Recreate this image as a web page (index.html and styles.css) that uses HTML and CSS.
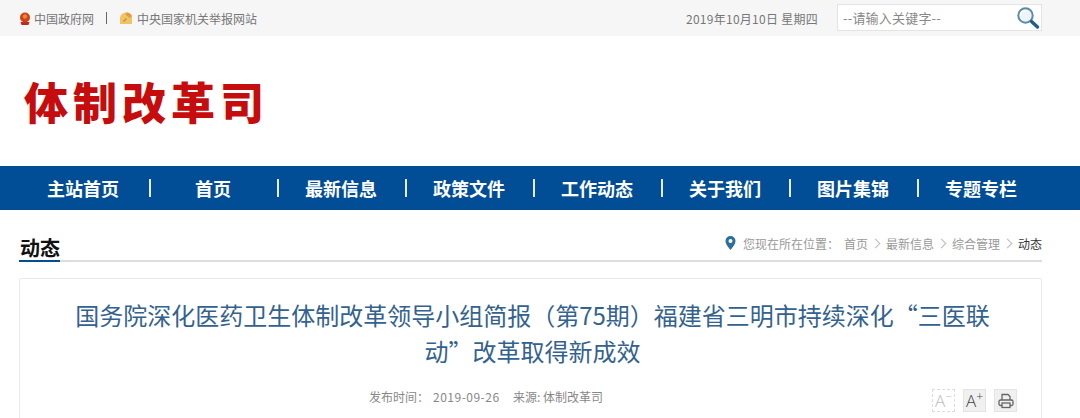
FILE: index.html
```html
<!DOCTYPE html>
<html lang="zh-CN">

<head>
    <meta charset="UTF-8">
    <title>体制改革司</title>
    <link rel="stylesheet" href="styles.css">
</head>

<body>
    <!-- 顶部 -->
    <div class="topbar">
        <div class="top-links">
            <svg class="emblem" width="12" height="13" viewBox="0 0 12 13">
                <circle cx="6" cy="5.500" r="5" fill="#d2401c"/>
                <circle cx="6" cy="4.500" r="2.200" fill="#e58a2e"/>
                <path d="M1.500 10h9l-1 3h-7z" fill="#b8301a"/>
            </svg>
            <span>中国政府网</span>
            <i class="top-sep"></i>
            <svg class="emblem emblem-2" width="12" height="12" viewBox="0 0 12 12">
                <path d="M0 12V6.500C0 3 3 .5 6.500 .5 9 .5 11 2 12 4v8z" fill="#eec563"/>
                <path d="M6.500 .5C9 .5 11 2 12 4L9.500 6 5.500 2.500z" fill="#e39a4a"/>
                <path d="M3 9l3-3 1 1-3 3z" fill="#d9863a"/>
            </svg>
            <span>中央国家机关举报网站</span>
        </div>
        <div class="top-right">
            <span class="top-date">2019年10月10日 星期四</span>
            <div class="search">
                <span class="search-text">--请输入关键字--</span>
                <svg width="24" height="24" viewBox="0 0 24 24">
                    <circle cx="9.500" cy="9.500" r="7.200" fill="#eef4f8" stroke="#5a8aa8" stroke-width="2"/>
                    <path d="M4.500 9.500a5 5 0 0 1 5-5" fill="none" stroke="#fff" stroke-width="1.500"/>
                    <path d="M15.500 15.500l6 5.500" stroke="#1f5f90" stroke-width="3.400" stroke-linecap="round"/>
                </svg>
            </div>
        </div>
    </div>

    <div class="logo">体制改革司</div>

    <!-- 导航 -->
    <div class="nav">
        <a class="nav-first">主站首页</a><i></i>
        <a>首页</a><i></i>
        <a>最新信息</a><i></i>
        <a>政策文件</a><i></i>
        <a>工作动态</a><i></i>
        <a>关于我们</a><i></i>
        <a>图片集锦</a><i></i>
        <a>专题专栏</a>
    </div>

    <div class="main">
        <div class="crumb-row">
            <h2 class="section-title">动态</h2>
            <div class="crumbs">
                <svg class="pin" width="11" height="14" viewBox="0 0 11 14">
                    <path fill-rule="evenodd" d="M5.500 0a5 5 0 0 1 5 5c0 3.500-5 9-5 9s-5-5.500-5-9a5 5 0 0 1 5-5zm0 3a2 2 0 1 0 0 4 2 2 0 0 0 0-4z" fill="#2a6f9e"/>
                </svg>
                <span class="here">您现在所在位置：</span>
                <span>首页</span><b></b>
                <span>最新信息</span><b></b>
                <span>综合管理</span><b></b>
                <span class="current">动态</span>
            </div>
        </div>

        <div class="article">
            <h1 class="article-title">国务院深化医药卫生体制改革领导小组简报（第75期）福建省三明市持续深化“三医联动”改革取得新成效</h1>
            <div class="meta-row">
                <div class="meta">
                    <span class="meta-label">发布时间：</span>
                    <span class="meta-date">2019-09-26</span>
                    <span>来源: 体制改革司</span>
                </div>
                <div class="tools">
                    <span class="tool tool-off">A<sup>−</sup></span>
                    <span class="tool">A<sup>+</sup></span>
                    <span class="tool">
                        <svg width="16" height="16" viewBox="0 0 16 16" fill="none" stroke="#666" stroke-width="1.300">
                            <path d="M4 7V1.500h6l2 2V7"/>
                            <rect x="1" y="7" width="14" height="5.500" rx="1.500"/>
                            <rect x="4" y="10" width="8" height="4.500" fill="#eee"/>
                        </svg>
                    </span>
                </div>
            </div>
        </div>
    </div>
</body>

</html>
```

FILE: styles.css
```css
* {
    margin: 0;
    padding: 0;
    box-sizing: border-box;
}

body {
    background: #fff;
    font-family: "Microsoft YaHei", "Noto Sans CJK SC", sans-serif;
    overflow: hidden;
}

.topbar {
    height: 36px;
    background: #f6f6f6;
    padding: 0 38px 0 19px;
    display: flex;
    justify-content: space-between;
    align-items: center;
    font-size: 12px;
    color: #777;
}

.top-links,
.top-right {
    display: flex;
    align-items: center;
}

.emblem {
    margin-right: 3px;
}

.emblem-2 {
    margin-right: 5px;
}

.top-sep {
    width: 1px;
    height: 12px;
    background: #666;
    margin: 0 13px 0 12px;
}

.top-date {
    margin-right: 19px;
    letter-spacing: 0.27px;
}

.search {
    width: 205px;
    height: 27px;
    background: #fff;
    border: 1px solid #e4e4e4;
    display: flex;
    justify-content: space-between;
    align-items: center;
    padding: 0 1px 0 5px;
    margin-top: -1px;
}

.search-text {
    font-size: 13px;
    letter-spacing: 0.2px;
    color: #888;
}

.logo {
    height: 130px;
    padding: 36px 0 0 24px;
    font-size: 44px;
    line-height: 58px;
    font-weight: 900;
    letter-spacing: 5px;
    color: #c60c0c;
}

.nav {
    height: 44px;
    background: #014e96;
    display: flex;
    align-items: center;
    padding-left: 18px;
}

.nav a {
    width: 128px;
    text-align: center;
    font-size: 18px;
    font-weight: 700;
    color: #fff;
}

.nav .nav-first {
    width: 131px;
    padding-right: 1px;
}

.nav i {
    width: 2px;
    height: 18px;
    background: #e6eef5;
    margin-right: -2px;
}

.main {
    padding: 0 38px 0 19px;
}

.crumb-row {
    height: 52px;
    border-bottom: 2px solid #ddd;
    display: flex;
    justify-content: space-between;
    align-items: flex-end;
}

.section-title {
    font-size: 20px;
    font-weight: 700;
    line-height: 26px;
    color: #111;
    height: 27px;
    padding-left: 1px;
    border-bottom: 2px solid #014e96;
    margin-bottom: -2px;
}

.crumbs {
    display: flex;
    align-items: center;
    font-size: 12px;
    color: #999;
    height: 34px;
}

.pin {
    margin-right: 7px;
}

.here {
    margin-right: 5px;
}

/* 面包屑箭头 */
.crumbs b {
    width: 18px;
    height: 7px;
}

.crumbs b::after {
    content: "";
    display: block;
    width: 6px;
    height: 6px;
    margin-left: 4px;
    border-top: 1px solid #bbb;
    border-right: 1px solid #bbb;
    transform: rotate(45deg);
}

.current {
    color: #333;
}

.article {
    margin-top: 16px;
    height: 140px;
    border: 1px solid #eaeaea;
    border-bottom: 0;
    border-radius: 2px 2px 0 0;
    padding: 0 36px 0 40px;
}

.article-title {
    font-size: 24px;
    font-weight: 400;
    line-height: 36px;
    color: #33628f;
    text-align: center;
    padding-top: 18px;
}

.meta-row {
    display: flex;
    justify-content: space-between;
    align-items: center;
    margin-top: 12px;
    margin-right: -12px;
}

.meta {
    display: flex;
    font-size: 12px;
    color: #888;
    margin-left: 309px;
}

.meta-label {
    width: 64px;
}

.meta-date {
    width: 80px;
    letter-spacing: 0.5px;
}

.tools {
    display: flex;
    gap: 8px;
    margin-top: 8px;
}

.tool {
    width: 23px;
    height: 23px;
    background: #f0f0f0;
    border: 1px solid #e4e4e4;
    display: flex;
    justify-content: center;
    align-items: center;
    font-family: "Open Sans", sans-serif;
    font-weight: 300;
    font-size: 17px;
    line-height: 21px;
    color: #444;
}

.tool sup {
    font-size: 12px;
    line-height: 1;
    align-self: flex-start;
    margin-top: 1px;
}

.tool-off {
    background: #fff;
    border: 1px dashed #ddd;
    color: #bbb;
}
```
